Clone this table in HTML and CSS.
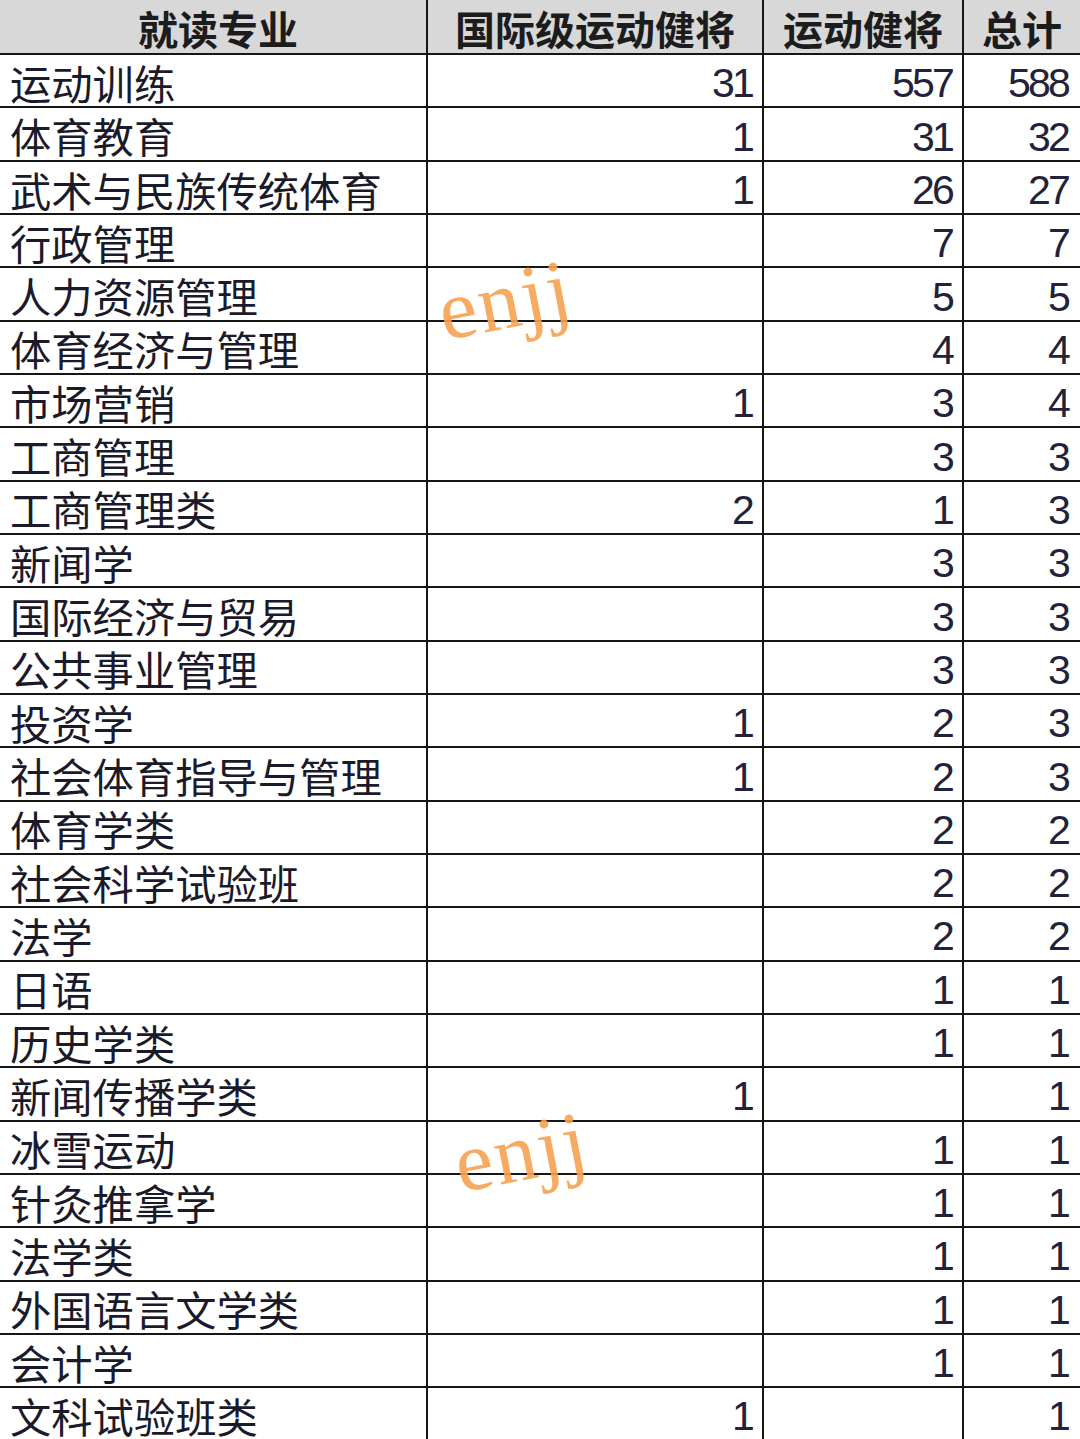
FILE: index.html
```html
<!DOCTYPE html>
<html lang="zh-CN">
<head>
<meta charset="utf-8">
<title>就读专业统计</title>
<link rel="stylesheet" href="styles.css">
</head>
<body>
<div class="sheet">
  <div class="row head">
    <div class="cell name">就读专业</div>
    <div class="cell">国际级运动健将</div>
    <div class="cell">运动健将</div>
    <div class="cell last">总计</div>
  </div>
  <div class="row"><div class="cell name">运动训练</div><div class="cell num">31</div><div class="cell num">557</div><div class="cell num last">588</div></div>
  <div class="row"><div class="cell name">体育教育</div><div class="cell num">1</div><div class="cell num">31</div><div class="cell num last">32</div></div>
  <div class="row"><div class="cell name">武术与民族传统体育</div><div class="cell num">1</div><div class="cell num">26</div><div class="cell num last">27</div></div>
  <div class="row"><div class="cell name">行政管理</div><div class="cell num"></div><div class="cell num">7</div><div class="cell num last">7</div></div>
  <div class="row"><div class="cell name">人力资源管理</div><div class="cell num"></div><div class="cell num">5</div><div class="cell num last">5</div></div>
  <div class="row"><div class="cell name">体育经济与管理</div><div class="cell num"></div><div class="cell num">4</div><div class="cell num last">4</div></div>
  <div class="row"><div class="cell name">市场营销</div><div class="cell num">1</div><div class="cell num">3</div><div class="cell num last">4</div></div>
  <div class="row"><div class="cell name">工商管理</div><div class="cell num"></div><div class="cell num">3</div><div class="cell num last">3</div></div>
  <div class="row"><div class="cell name">工商管理类</div><div class="cell num">2</div><div class="cell num">1</div><div class="cell num last">3</div></div>
  <div class="row"><div class="cell name">新闻学</div><div class="cell num"></div><div class="cell num">3</div><div class="cell num last">3</div></div>
  <div class="row"><div class="cell name">国际经济与贸易</div><div class="cell num"></div><div class="cell num">3</div><div class="cell num last">3</div></div>
  <div class="row"><div class="cell name">公共事业管理</div><div class="cell num"></div><div class="cell num">3</div><div class="cell num last">3</div></div>
  <div class="row"><div class="cell name">投资学</div><div class="cell num">1</div><div class="cell num">2</div><div class="cell num last">3</div></div>
  <div class="row"><div class="cell name">社会体育指导与管理</div><div class="cell num">1</div><div class="cell num">2</div><div class="cell num last">3</div></div>
  <div class="row"><div class="cell name">体育学类</div><div class="cell num"></div><div class="cell num">2</div><div class="cell num last">2</div></div>
  <div class="row"><div class="cell name">社会科学试验班</div><div class="cell num"></div><div class="cell num">2</div><div class="cell num last">2</div></div>
  <div class="row"><div class="cell name">法学</div><div class="cell num"></div><div class="cell num">2</div><div class="cell num last">2</div></div>
  <div class="row"><div class="cell name">日语</div><div class="cell num"></div><div class="cell num">1</div><div class="cell num last">1</div></div>
  <div class="row"><div class="cell name">历史学类</div><div class="cell num"></div><div class="cell num">1</div><div class="cell num last">1</div></div>
  <div class="row"><div class="cell name">新闻传播学类</div><div class="cell num">1</div><div class="cell num"></div><div class="cell num last">1</div></div>
  <div class="row"><div class="cell name">冰雪运动</div><div class="cell num"></div><div class="cell num">1</div><div class="cell num last">1</div></div>
  <div class="row"><div class="cell name">针灸推拿学</div><div class="cell num"></div><div class="cell num">1</div><div class="cell num last">1</div></div>
  <div class="row"><div class="cell name">法学类</div><div class="cell num"></div><div class="cell num">1</div><div class="cell num last">1</div></div>
  <div class="row"><div class="cell name">外国语言文学类</div><div class="cell num"></div><div class="cell num">1</div><div class="cell num last">1</div></div>
  <div class="row"><div class="cell name">会计学</div><div class="cell num"></div><div class="cell num">1</div><div class="cell num last">1</div></div>
  <div class="row"><div class="cell name">文科试验班类</div><div class="cell num">1</div><div class="cell num"></div><div class="cell num last">1</div></div>
  <div class="mark mark-1">enjj</div>
  <div class="mark mark-2">enjj</div>
</div>
</body>
</html>
```

FILE: styles.css
```css
html, body {
  margin: 0;
  padding: 0;
  background: #ffffff;
}
body {
  width: 1080px;
  height: 1439px;
  overflow: hidden;
}
.sheet {
  position: relative;
  width: 1080px;
}
.row {
  display: grid;
  grid-template-columns: 428px 336px 200px 116px;
  height: 53.33px;
  box-sizing: border-box;
  border-bottom: 2px solid #161616;
}
.row.head {
  height: 55px;
  background: #d8d8d8;
}
.cell {
  box-sizing: border-box;
  border-right: 2px solid #161616;
  display: flex;
  align-items: flex-end;
  font-family: "Noto Sans CJK SC", sans-serif;
  font-size: 41.3px;
  line-height: 1.15;
  color: #1a1a2a;
  padding-bottom: 0;
  white-space: nowrap;
}
.cell.last {
  border-right: none;
}
.head .cell {
  justify-content: center;
  font-weight: 700;
  color: #1c1c1c;
  font-size: 40px;
  padding-bottom: 2px;
}
.cell.name {
  padding-left: 10px;
}
.cell.num {
  justify-content: flex-end;
  padding-right: 10px;
  padding-bottom: 0;
  font-family: "Liberation Sans", sans-serif;
  font-size: 41px;
  line-height: 1.1;
  letter-spacing: -2.8px;
  color: #22223a;
}
.cell.num.last {
  padding-right: 12px;
}
.mark {
  position: absolute;
  font-family: "Liberation Serif", serif;
  font-size: 84px;
  line-height: 1;
  color: #f7a24f;
  opacity: 0.9;
  transform: rotate(-11deg);
  letter-spacing: 2px;
}
.mark-1 {
  left: 438px;
  top: 258px;
}
.mark-2 {
  left: 454px;
  top: 1110px;
}
```
